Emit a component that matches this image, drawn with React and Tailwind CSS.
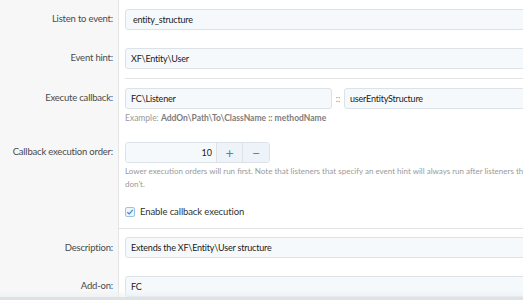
import React from "react";

const font = { fontFamily: 'Lato, "Noto Sans", sans-serif' };

function Row({ label, children, className = "" }) {
  return (
    <div className={"flex " + className}>
      <div className="w-[119px] shrink-0 bg-[#f7f7f7] border-r border-[#e4e4e4] text-right pr-[5px] text-[#4a4a4a] pt-[12px] leading-[14px] whitespace-nowrap text-[9.5px] tracking-[-0.2px]">
        {label}
      </div>
      <div className="flex-1 pl-[6px]">{children}</div>
    </div>
  );
}

function Input({ value, className = "" }) {
  return (
    <div
      className={
        "h-[21px] border border-[#dde2e8] bg-[#f6f9fc] rounded-[3px] px-[5px] flex items-center text-[#1a1a1a] text-[9px] tracking-[-0.2px] " +
        className
      }
    >
      {value}
    </div>
  );
}

export default function App() {
  return (
    <div className="w-[523px] h-[300px] overflow-hidden relative bg-white" style={font}>
      <div className="w-[620px]">
        {/* Listen to event */}
        <Row label="Listen to event:">
          <div className="py-[9px]">
            <Input value="entity_structure" className="pl-[7px]" />
          </div>
        </Row>

        {/* Event hint */}
        <Row label="Event hint:">
          <div className="py-[9px] border-b border-[#e4e4e4]">
            <Input value="XF\Entity\User" />
          </div>
        </Row>

        {/* Execute callback */}
        <Row label="Execute callback:">
          <div className="pt-[9px] pb-[8px]">
            <div className="flex items-center">
              <Input value="FC\Listener" className="w-[207px]" />
              <span className="w-[12px] text-center text-[#8a8a8a] text-[9px]">::</span>
              <Input value="userEntityStructure" className="flex-1" />
            </div>
            <div className="mt-[3px] text-[8.5px] leading-[13px] text-[#9a9a9a]">
              Example: <span className="font-bold text-[#7d7d7d]">AddOn\Path\To\ClassName :: methodName</span>
            </div>
          </div>
        </Row>

        {/* Callback execution order */}
        <Row label="Callback execution order:">
          <div className="pt-[9px] pb-[6px]">
            <div className="flex w-[145px] h-[21px] border border-[#dde2e8] rounded-[3px] overflow-hidden text-[9px]">
              <div className="flex-1 bg-[#f6f9fc] flex items-center justify-end pr-[4px] text-[#1a1a1a]">10</div>
              <div className="w-[26px] bg-[#edf3f9] border-l border-[#dde2e8] flex items-center justify-center text-[#3f8ad0] text-[14px] leading-none">
                +
              </div>
              <div className="w-[27px] bg-[#edf3f9] border-l border-[#dde2e8] flex items-center justify-center text-[#3f8ad0] text-[14px] leading-none">
                −
              </div>
            </div>
            <div className="mt-[2px] text-[8px] leading-[13px] text-[#9a9a9a] w-[420px]">
              Lower execution orders will run first. Note that listeners that specify an event hint will always run after listeners that don't.
            </div>
          </div>
        </Row>

        {/* Enable callback */}
        <div className="flex">
          <div className="w-[119px] shrink-0 bg-[#f7f7f7] border-r border-[#e4e4e4]"></div>
          <div className="flex-1 pl-[6px] pt-[8px] pb-[9px] border-b border-[#e4e4e4]">
            <label className="flex items-center gap-[5px] text-[#303030] text-[9.5px] tracking-[-0.1px] leading-[14px]">
              <span className="w-[10px] h-[10px] border border-[#9cc3e4] bg-[#eef5fb] rounded-[2px] flex items-center justify-center">
                <svg width="8" height="8" viewBox="0 0 8 8">
                  <path d="M1.3 4.2 L3.2 6 L6.8 1.8" fill="none" stroke="#3f8ad0" strokeWidth="1.2" />
                </svg>
              </span>
              Enable callback execution
            </label>
          </div>
        </div>

        {/* Description */}
        <Row label="Description:">
          <div className="pt-[8px] pb-[9px]">
            <Input value="Extends the XF\Entity\User structure" />
          </div>
        </Row>

        {/* Add-on */}
        <Row label="Add-on:">
          <div className="py-[9px]">
            <Input value="FC" />
          </div>
        </Row>
      </div>

      {/* footer shadow */}
      <div className="absolute left-0 right-0 bottom-0 h-[10px] bg-gradient-to-b from-transparent to-[#eceff2]"></div>
      <div className="absolute left-0 right-0 bottom-0 h-[3px] bg-[#dfe2e5]"></div>
    </div>
  );
}
